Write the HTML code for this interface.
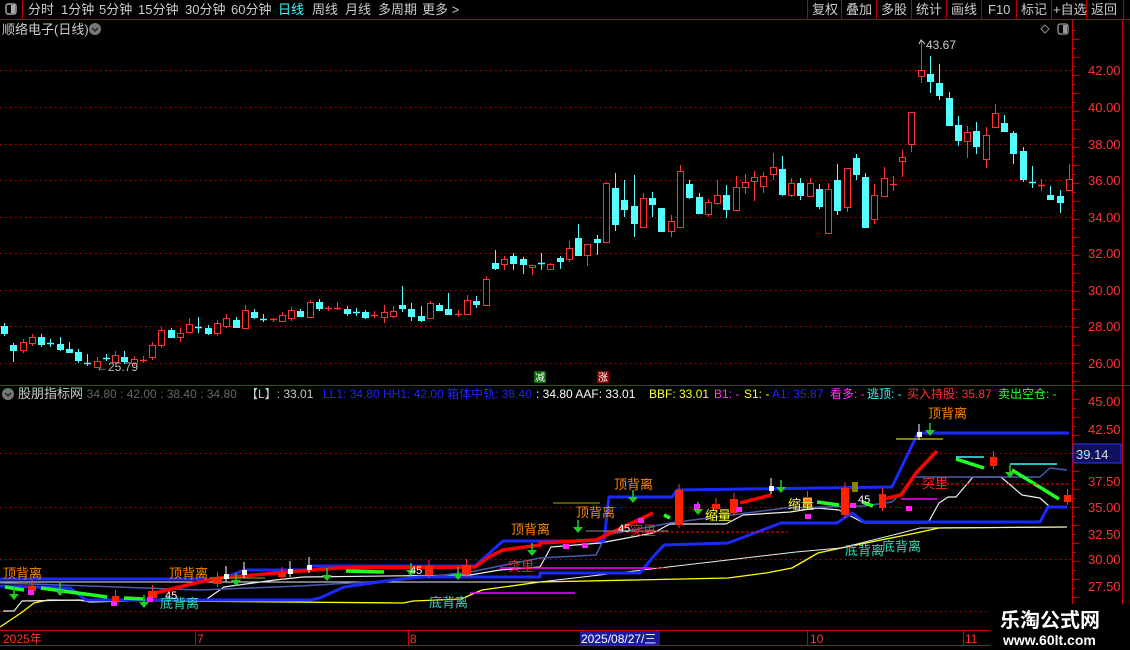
<!DOCTYPE html>
<html><head><meta charset="utf-8"><style>
html,body{margin:0;padding:0;background:#000;width:1130px;height:650px;overflow:hidden}
svg{display:block}
text{font-family:"Liberation Sans","Noto Sans CJK SC",sans-serif}
</style></head><body>
<svg id="s" width="1130" height="650" xmlns="http://www.w3.org/2000/svg" font-size="13">
<!-- top bar -->
<rect x="0" y="0" width="1130" height="19" fill="#000"/>
<line x1="0" y1="19.5" x2="1130" y2="19.5" stroke="#b00" />
<line x1="22.5" y1="0" x2="22.5" y2="19" stroke="#b00"/>
<rect x="6" y="4" width="10" height="10" rx="2" fill="none" stroke="#aaa" stroke-width="1.4"/><rect x="11" y="5" width="4" height="8" fill="#aaa"/>
<g fill="#ccc" font-size="13">
<text x="28" y="14">分时</text><text x="61" y="14">1分钟</text><text x="99" y="14">5分钟</text><text x="138" y="14">15分钟</text><text x="185" y="14">30分钟</text><text x="231" y="14">60分钟</text><text x="278" y="14" fill="#3ff">日线</text><text x="312" y="14">周线</text><text x="345" y="14">月线</text><text x="378" y="14">多周期</text><text x="422" y="14">更多 &gt;</text>
</g>
<g stroke="#b00"><line x1="807.5" y1="0" x2="807.5" y2="19"/><line x1="841.5" y1="0" x2="841.5" y2="19"/><line x1="876.5" y1="0" x2="876.5" y2="19"/><line x1="911.5" y1="0" x2="911.5" y2="19"/><line x1="946.5" y1="0" x2="946.5" y2="19"/><line x1="981.5" y1="0" x2="981.5" y2="19"/><line x1="1016.5" y1="0" x2="1016.5" y2="19"/><line x1="1051.5" y1="0" x2="1051.5" y2="19"/><line x1="1086.5" y1="0" x2="1086.5" y2="19"/><line x1="1123.5" y1="0" x2="1123.5" y2="19"/></g>
<g fill="#ccc" font-size="13"><text x="812" y="14">复权</text><text x="846" y="14">叠加</text><text x="881" y="14">多股</text><text x="916" y="14">统计</text><text x="951" y="14">画线</text><text x="988" y="14">F10</text><text x="1021" y="14">标记</text><text x="1053" y="14">+自选</text><text x="1091" y="14">返回</text></g>
<!-- title row -->
<text x="2" y="34" fill="#ccc" font-size="13">顺络电子(日线)</text>
<circle cx="95" cy="29" r="6" fill="#777"/><path d="M92 28 L95 31 L98 28" stroke="#222" fill="none" stroke-width="1.5"/>
<path d="M1045 25 L1049 29 L1045 33 L1041 29Z" fill="none" stroke="#888"/>
<rect x="1058" y="24" width="10" height="10" rx="2" fill="none" stroke="#999" stroke-width="1.3"/><rect x="1063" y="25" width="4" height="8" fill="#999"/>
<!-- axes -->
<line x1="1072.5" y1="20" x2="1072.5" y2="630" stroke="#c00"/>
<line x1="1122.5" y1="20" x2="1122.5" y2="630" stroke="#c00"/>
<line x1="0" y1="385.5" x2="1130" y2="385.5" stroke="#c00"/>
<g id="grid" stroke="#c00" stroke-dasharray="1.5 3.5"></g>
<g fill="#f33" font-size="13" id="lbl">
<text x="1088" y="75">42.00</text><text x="1088" y="112">40.00</text><text x="1088" y="149">38.00</text><text x="1088" y="185">36.00</text><text x="1088" y="222">34.00</text><text x="1088" y="258">32.00</text><text x="1088" y="295">30.00</text><text x="1088" y="331">28.00</text><text x="1088" y="368">26.00</text>
<text x="1088" y="406">45.00</text><text x="1088" y="434">42.50</text><text x="1088" y="486">37.50</text><text x="1088" y="512">35.00</text><text x="1088" y="539">32.50</text><text x="1088" y="564">30.00</text><text x="1088" y="591">27.50</text>
</g>
<rect x="1073" y="444" width="48" height="19" fill="#101060" stroke="#33f"/>
<text x="1076" y="459" fill="#ddd" font-size="13">39.14</text>
<g id="ticks" stroke="#c00"></g>
<g id="candles"></g>
<!-- markers top -->
<text x="96" y="371" fill="#bbb" font-size="12">←25.79</text>
<text x="926" y="49" fill="#ccc" font-size="12">43.67</text>
<path d="M919 44 L921 40 L925 44" stroke="#ccc" fill="none"/>
<rect x="534" y="371" width="12" height="12" fill="#0a6a0a"/><text x="535" y="381" fill="#fff" font-size="10">减</text>
<rect x="597" y="371" width="12" height="12" fill="#800"/><text x="598" y="381" fill="#fff" font-size="10">涨</text>
<!-- indicator header -->
<circle cx="8" cy="394" r="6" fill="#777"/><path d="M5 393 L8 396 L11 393" stroke="#222" fill="none" stroke-width="1.5"/>
<g font-size="12">
<text x="18" y="398" fill="#ccc" font-size="13">股朋指标网</text>
<text x="80" y="398" fill="#666">: 34.80 : 42.00 : 38.40 : 34.80</text>
<text x="246" y="398" fill="#ccc">【L】: 33.01</text>
<text x="323" y="398" fill="#22f">LL1: 34.80 HH1: 42.00 箱体中轨: 38.40</text>
<text x="536" y="398" fill="#fff">: 34.80 AAF: 33.01</text>
<text x="649" y="398" fill="#ff3">BBF: 33.01</text>
<text x="714" y="398" fill="#f3f">B1: -</text>
<text x="744" y="398" fill="#ff3">S1: -</text>
<text x="772" y="398" fill="#22f">A1: 35.87</text>
<text x="830" y="398" fill="#f3f">看多: -</text>
<text x="867" y="398" fill="#3ff">逃顶: -</text>
<text x="907" y="398" fill="#f33">买入持股: 35.87</text>
<text x="998" y="398" fill="#3f3">卖出空仓: -</text>
</g>
<g id="ind" fill="none" stroke-linejoin="round"></g>
<!-- labels lower -->
<g font-size="13" fill="#f80">
<text x="3" y="578">顶背离</text><text x="169" y="578">顶背离</text><text x="511" y="534">顶背离</text><text x="576" y="517">顶背离</text><text x="614" y="489">顶背离</text><text x="928" y="418">顶背离</text>
</g>
<g font-size="13" fill="#3db">
<text x="160" y="608">底背离</text><text x="429" y="607">底背离</text><text x="845" y="555">底背离</text><text x="882" y="551">底背离</text>
</g>
<g font-size="13" fill="#f22"><text x="508" y="571">突里</text><text x="630" y="535">突里</text><text x="922" y="488">突里</text></g>
<g font-size="13" fill="#ff3"><text x="705" y="520">缩量</text><text x="788" y="509">缩量</text></g>
<g font-size="11" fill="#fff"><text x="618" y="532">45</text><text x="858" y="503">45</text><text x="410" y="574">45</text><text x="165" y="599">45</text></g>
<!-- bottom axis -->
<line x1="0" y1="630.5" x2="1072" y2="630.5" stroke="#c00"/>
<line x1="0" y1="645.5" x2="1122" y2="645.5" stroke="#c00"/>
<rect x="580" y="631" width="80" height="14" fill="#1a1aa0"/>
<g font-size="12" fill="#f33"><text x="3" y="643">2025年</text><text x="197" y="643">7</text><text x="410" y="643">8</text><text x="810" y="643">10</text><text x="965" y="643">11</text></g>
<text x="581" y="643" font-size="12" fill="#fff">2025/08/27/三</text>
<g stroke="#c00"><line x1="195.5" y1="631" x2="195.5" y2="645"/><line x1="408.5" y1="631" x2="408.5" y2="645"/><line x1="807.5" y1="631" x2="807.5" y2="645"/><line x1="963.5" y1="631" x2="963.5" y2="645"/></g>
<!-- watermark -->
<rect x="990" y="604" width="140" height="46" fill="#000"/>
<text x="1000" y="627" fill="#fff" font-size="20" font-weight="bold">乐淘公式网</text>
<text x="1003" y="645" fill="#fff" font-size="14" font-weight="bold" font-family="Liberation Serif,serif">www.60lt.com</text>
</svg>
<script>
var NS="http://www.w3.org/2000/svg";
function el(p,t,a){var e=document.createElementNS(NS,t);for(var k in a)e.setAttribute(k,a[k]);document.getElementById(p).appendChild(e);return e;}
// grid
[70,107,144,180,217,253,290,326,363,453,507,559,611].forEach(function(y){el('grid','line',{x1:0,x2:1072,y1:y+.5,y2:y+.5});});
for(var y=30;y<630;y+=9){el('ticks','line',{x1:1072,x2:y%18<9?1079:1076,y1:y+.5,y2:y+.5});}
// candles [top,bottom,color,high,low]
var C=[[326,333,'c'],[345,350,'c',343,362],[342,350,'r'],[337,343,'r'],[337,344,'c'],[343,343,'c',339,347],[344,349,'c',337,351],[349,352,'c',342,353],[352,360,'c'],[363,363,'c',354,366],[361,367,'r',357,368],[358,358,'c',354,361],[355,362,'r',351,363],[357,361,'c',351,364],[359,363,'r'],[360,360,'r',356,363],[345,357,'r'],[330,345,'r'],[330,337,'c',328,338],[333,337,'r',328,342],[324,332,'r',318,333],[327,327,'c',317,333],[328,333,'c',325,335],[323,333,'r'],[318,326,'r',314,328],[320,327,'c',317,328],[310,328,'r',305,329],[312,317,'c',309,319],[319,319,'c',314,322],[319,319,'r',318,322],[315,321,'r',312,322],[310,318,'r'],[311,316,'c',309,317],[302,317,'r',300,318],[302,308,'c',299,311],[308,308,'r',306,311],[308,308,'r',302,310],[309,313,'c',306,316],[312,312,'c',308,316],[312,317,'c',310,319],[315,315,'r',311,318],[312,317,'r',305,323],[311,316,'r',306,318],[305,308,'c',286,312],[309,316,'c',303,321],[316,320,'c',306,322],[303,318,'r',301,319],[305,310,'c',303,311],[309,314,'c',293,315],[314,314,'r',310,317],[300,314,'r',295,315],[301,304,'c',296,308],[279,305,'r',276,306],[263,268,'c',250,270],[259,264,'r',256,270],[256,263,'c',253,270],[259,264,'c',257,274],[265,267,'r',265,275],[263,263,'c',253,270],[264,269,'r',263,270],[258,261,'c',256,269],[248,259,'r',241,262],[238,255,'c',224,256],[244,255,'r',244,266],[239,242,'c',235,255],[183,242,'r',182,243],[188,224,'c',173,231],[200,209,'c',180,217],[206,223,'c',175,237],[198,227,'r',193,227],[198,204,'c',192,217],[208,231,'c',208,231],[221,231,'r',215,237],[171,227,'r',165,227],[184,197,'c',180,199],[197,213,'c',193,214],[202,214,'r',199,217],[195,203,'r',180,205],[195,209,'c',185,218],[187,210,'r',176,210],[182,187,'r',174,194],[177,181,'r',171,201],[176,186,'r',172,193],[167,174,'r',153,180],[169,194,'c',156,196],[183,195,'r',178,197],[183,195,'c',178,200],[183,196,'r',178,196],[189,206,'c',184,209],[189,233,'r',183,234],[180,210,'c',164,215],[168,207,'r',168,212],[158,174,'c',154,180],[177,227,'c',173,228],[195,219,'r',184,224],[178,196,'r',167,197],[184,184,'r',176,191],[157,161,'r',150,177],[112,144,'r',112,152],[70,76,'r',40,83],[74,81,'c',56,93],[83,95,'c',64,100],[98,125,'c',92,126],[125,140,'c',116,146],[132,141,'r',126,158],[131,146,'c',122,154],[135,159,'r',127,168],[113,127,'r',104,127],[123,131,'c',115,132],[133,153,'c',131,164],[151,179,'c',147,182],[182,182,'c',166,188],[185,185,'r',179,191],[195,199,'c',186,199],[196,202,'c',190,213],[179,190,'r',164,190]];
C.forEach(function(c,i){
 var x=Math.round(4+i*9.26),col=c[2]=='r'?'#ff3232':'#54ffff';
 var hi=c[3]!==undefined?c[3]:c[0]-3, lo=c[4]!==undefined?c[4]:c[1]+3;
 el('candles','line',{x1:x+.5,x2:x+.5,y1:hi,y2:lo,stroke:col});
 var h=c[1]-c[0];
 if(h<1){el('candles','line',{x1:x-3,x2:x+4,y1:c[0]+.5,y2:c[0]+.5,stroke:col,'stroke-width':1.5});}
 else if(c[2]=='r'){el('candles','rect',{x:x-3+.5,y:c[0]+.5,width:6,height:h,fill:'#000',stroke:col});}
 else{el('candles','rect',{x:x-3,y:c[0],width:7,height:h+1,fill:col});}
});
function pl(pts,col,w,dash){var a={points:pts,stroke:col,'stroke-width':w||1};if(dash)a['stroke-dasharray']=dash;el('ind','polyline',a);}
pl("0,627 21,613 34,603 48,600 403,603 413,601 461,599 482,590 540,582 728,578 766,573 792,568 818,553 841,548 916,533 939,528 1067,527","#ff0",1.3);
pl("0,582 540,582 796,552 841,548 901,533 920,528 1067,527","#eee",1);
pl("3,611 14,611 22,601 79,600 90,602 207,599 224,587 275,580 303,577 470,575 500,570 540,567 551,547 600,543 627,538 653,533 670,524 726,524 743,515 790,512 817,508 839,510 864,523 928,523 939,503 948,497 956,497 973,477 1001,477 1022,495 1040,498 1050,507 1067,508","#eee",1.2);
pl("0,583 60,585 200,590 300,586 400,580 470,572 540,558 596,555 606,535 670,523 785,508 864,506 892,502 901,493 913,477 1040,477 1050,468 1067,470","#4a5ab0",1.5);
pl("0,586 70,588 86,600 310,600 320,598 344,587 393,580 420,577 540,577 540,573 640,573 653,557 664,545 728,543 781,523 837,523 852,513 864,522 1040,522 1048,507 1067,507","#1a2aff",3);
pl("0,579 220,579 245,570 306,570 310,566 475,566 503,541 604,541 609,497 672,497 677,490 892,487 918,433 1069,433","#1a2aff",3);
pl("155,593 200,582 220,578 265,574 337,568 475,567 489,557 503,550 540,545 540,543 596,540 653,513","#f00",3.5);
pl("740,503 771,495","#f00",3.5);
pl("879,500 901,495 916,473 937,451","#f00",3.5);
["5,587 24,590","41,588 107,597","124,598 143,599","346,571 384,572","664,515 670,518","817,502 839,505","862,502 873,506","956,459 984,468","1012,470 1059,499"].forEach(function(p){pl(p,"#2f2",3.5);});
pl("470,593 575,593","#f0f",1.5);pl("500,568 651,568","#f0f",1.5);pl("651,568 668,568","#f00",1,"3 2");
pl("606,532 788,532","#f00",1,"3 2");pl("901,484 1069,484","#f00",1,"3 2");pl("901,499 937,499","#f0f",1.5);
pl("896,439 943,439","#aa0",1.5);pl("956,457 984,457","#3ff",1.5);pl("1010,464 1057,464","#3ff",1.5);
pl("586,531 668,531","#888",1);pl("210,578 265,578","#aa0",1);pl("553,503 600,503","#aa0",1);
// lower candles
[[675,490,683,525],[841,488,849,515],[879,494,886,508],[990,457,997,466],[1064,495,1071,502],[730,499,738,513],[803,497,812,505],[712,504,720,509],[148,591,157,598],[112,596,119,602],[28,586,36,591],[213,578,222,584],[278,573,286,577],[425,566,433,575],[462,565,471,574]].forEach(function(r){
 el('ind','line',{x1:(r[0]+r[2])/2,x2:(r[0]+r[2])/2,y1:r[1]-6,y2:r[3]+3,stroke:'#f33'});
 el('ind','rect',{x:r[0],y:r[1],width:r[2]-r[0],height:r[3]-r[1],fill:'#f20',stroke:'none'});});
el('ind','rect',{x:852,y:482,width:6,height:10,fill:'#880',stroke:'none'});
[[771,486],[919,432],[226,574],[244,570],[290,569],[309,565]].forEach(function(p){el('ind','line',{x1:p[0],x2:p[0],y1:p[1]-8,y2:p[1]+8,stroke:'#fff'});el('ind','rect',{x:p[0]-2,y:p[1],width:5,height:5,fill:'#fff',stroke:'none'});});
// arrows
[[14,597],[60,593],[144,605],[236,583],[327,578],[411,573],[458,577],[532,553],[578,530],[633,500],[698,512],[781,490],[930,433],[1010,475]].forEach(function(a){
 el('ind','line',{x1:a[0],x2:a[0],y1:a[1]-10,y2:a[1],stroke:'#2c2','stroke-width':1.5});
 el('ind','path',{d:'M'+(a[0]-5)+' '+(a[1]-3)+' L'+(a[0]+5)+' '+(a[1]-3)+' L'+a[0]+' '+(a[1]+3)+'Z',fill:'#2c2',stroke:'none'});});
// magenta x marks
[[31,592],[114,603],[150,599],[566,546],[585,545],[641,520],[697,506],[739,509],[808,516],[853,505],[909,508]].forEach(function(m){el('ind','rect',{x:m[0]-3,y:m[1]-2,width:6,height:5,fill:'#f2f',stroke:'none'});});
</script>
</body></html>
